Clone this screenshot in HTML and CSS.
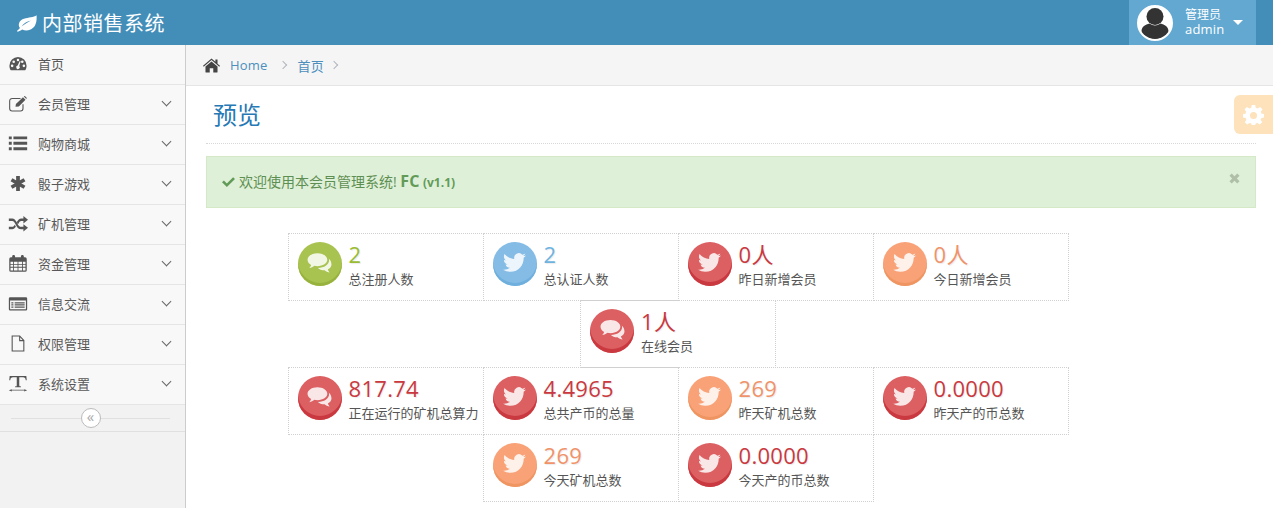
FILE: index.html
```html
<!DOCTYPE html>
<html lang="zh-CN">
<head>
    <meta charset="UTF-8">
    <meta name="viewport" content="width=device-width, initial-scale=1.0">
    <title>内部销售系统</title>
    <link rel="stylesheet" href="styles.css">
</head>
<body>
    <svg class="sprite" xmlns="http://www.w3.org/2000/svg">
        <symbol id="i-leaf" viewBox="0 0 24 20"><path d="M23.500 1C24 8 22.500 13 19.500 15.500 16 19 11 19.500 7 17.500 5.500 18.500 4 19.500 2 20L1 19C2.500 18 3.500 17 4.500 15.800 3 14 2.800 11.500 3.800 9.500 5.500 5 12 4.500 17 3.500 19.500 3 22 2.200 23.500 1ZM17 7C12 8 8.500 10.500 6.300 14 9.500 11.500 13 9 17 7Z" fill-rule="evenodd"/></symbol>
        <symbol id="i-dash" viewBox="-2 -1 28 22"><path fill-rule="evenodd" d="M12 1A12 12 0 0 0 0 13C0 15.500 .7 17.800 2 19.500H22C23.300 17.800 24 15.500 24 13A12 12 0 0 0 12 1ZM12 3.200A1.800 1.800 0 1 1 12 6.800 1.800 1.800 0 0 1 12 3.200ZM6 5.800A1.800 1.800 0 1 1 6 9.400 1.800 1.800 0 0 1 6 5.800ZM18 5.800A1.800 1.800 0 1 1 18 9.400 1.800 1.800 0 0 1 18 5.800ZM3.800 11.500A1.800 1.800 0 1 1 3.800 15.100 1.800 1.800 0 0 1 3.800 11.500ZM20.200 11.500A1.800 1.800 0 1 1 20.200 15.100 1.800 1.800 0 0 1 20.200 11.500ZM14.500 6.500 15.700 7 13.800 13.500A2.500 2.500 0 1 1 11.500 12.800Z"/></symbol>
        <symbol id="i-edit" viewBox="0 0 24 20"><path fill="none" stroke="currentColor" stroke-width="1.300" d="M15 4H5A3 3 0 0 0 2 7V16A3 3 0 0 0 5 19H15A3 3 0 0 0 18 16V11"/><path d="M9.500 10.500 18 2.500 21 5.500 13 13.500 9 14ZM19 1.500 20 1C20.500 1 22.500 3 22.500 3.500L22 4.500Z"/></symbol>
        <symbol id="i-list" viewBox="0 0 24 20"><path d="M1 1.500H4.500V5H1ZM6.500 1.500H23V5H6.500ZM1 8H4.500V11.500H1ZM6.500 8H23V11.500H6.500ZM1 14.500H4.500V18H1ZM6.500 14.500H23V18H6.500Z"/></symbol>
        <symbol id="i-ast" viewBox="0 0 24 20"><path fill="none" stroke="currentColor" stroke-width="4.500" d="M12 1V19M4.200 5.500 19.800 14.500M19.800 5.500 4.200 14.500"/></symbol>
        <symbol id="i-random" viewBox="0 0 24 20"><path d="M18.500 1 24 5.500 18.500 10V7H16C14.500 7 13.800 8 12.800 9.700L12 11 10.500 8.300C12 5.800 13.500 4 16 4H18.500ZM1 4H5C7.500 4 9 6 10.300 8.300L12 11.500C13 13 14 14 16 14H18.500V11L24 15 18.500 19.500V17H16C12.500 17 11.200 14.800 9.800 12.300L8.500 10C7.500 8.300 6.800 7 5 7H1ZM1 14H5C6.500 14 7.300 13 8.200 11.500L9.500 13.700C8 15.800 7 17 5 17H1Z"/></symbol>
        <symbol id="i-cal" viewBox="0 0 24 20"><path fill-rule="evenodd" d="M3.500 2.500H5V1.500A1.300 1.300 0 0 1 8.500 1.500V2.500H15.500V1.500A1.300 1.300 0 0 1 19 1.500V2.500H20.500A2 2 0 0 1 22.500 4.500V18A2 2 0 0 1 20.500 20H3.500A2 2 0 0 1 1.500 18V4.500A2 2 0 0 1 3.500 2.500ZM3 8V10.500H6V8ZM7 8V10.500H11.500V8ZM12.500 8V10.500H17V8ZM18 8V10.500H21V8ZM3 11.500V14H6V11.500ZM7 11.500V14H11.500V11.500ZM12.500 11.500V14H17V11.500ZM18 11.500V14H21V11.500ZM3 15V18.500H6V15ZM7 15V18.500H11.500V15ZM12.500 15V18.500H17V15ZM18 15V18.500H21V15Z"/></symbol>
        <symbol id="i-alt" viewBox="0 0 24 20"><path fill-rule="evenodd" d="M2.500 2.500H21.500A1.500 1.500 0 0 1 23 4V17A1.500 1.500 0 0 1 21.500 18.500H2.500A1.500 1.500 0 0 1 1 17V4A1.500 1.500 0 0 1 2.500 2.500ZM2.500 6.500V17H21.500V6.500ZM4 8.500H6.500V10H4ZM8 8.500H20V10H8ZM4 11H6.500V12.500H4ZM8 11H20V12.500H8ZM4 13.500H6.500V15H4ZM8 13.500H20V15H8Z"/></symbol>
        <symbol id="i-file" viewBox="0 0 24 20"><path fill="none" stroke="currentColor" stroke-width="1.300" d="M5 1H14L19 6.500V19H5ZM14 1V6.500H19"/></symbol>
        <symbol id="i-text" viewBox="0 0 24 20"><path d="M2 1H22L22.500 6H21.300C21 3.500 20.200 2.500 18 2.500H13.500V12C13.500 13 14 13.300 15.500 13.500V14.500H8.500V13.500C10 13.300 10.500 13 10.500 12V2.500H6C3.800 2.500 3 3.500 2.700 6H1.500ZM4.500 16.800V17.500H19.500V16.800L23 18 19.500 19.700V18.500H4.500V19.700L1 18Z"/></symbol>
        <symbol id="i-home" viewBox="0 0 24 20"><path d="M12 0 17.500 4.800V1.500H20.500V7.400L24 10.500 23 11.700 12 2.300 1 11.700 0 10.500ZM12 4.300 20.500 11.500V19A1 1 0 0 1 19.500 20H14.500V14H9.500V20H4.500A1 1 0 0 1 3.500 19V11.500Z"/></symbol>
        <symbol id="i-twitter" viewBox="0 0 24 24"><path d="M23.953 4.570a10 10 0 01-2.825.775 4.958 4.958 0 002.163-2.723c-.951.555-2.005.959-3.127 1.184a4.920 4.920 0 00-8.384 4.482C7.690 8.095 4.067 6.130 1.640 3.162a4.822 4.822 0 00-.666 2.475c0 1.710.870 3.213 2.188 4.096a4.904 4.904 0 01-2.228-.616v.060a4.923 4.923 0 003.946 4.827 4.996 4.996 0 01-2.212.085 4.936 4.936 0 004.604 3.417 9.867 9.867 0 01-6.102 2.105c-.390 0-.779-.023-1.170-.067a13.995 13.995 0 007.557 2.209c9.053 0 13.998-7.496 13.998-13.985 0-.210 0-.420-.015-.630A9.935 9.935 0 0024 4.590z"/></symbol>
        <symbol id="i-comments" viewBox="0 0 24 22"><path d="M10 2C4.600 2 .5 4.800.5 8.400c0 2.100 1.400 3.900 3.500 5.100-.3 1.100-.9 2-1.800 2.900 1.900-.2 3.600-1 5-2.200.9.200 1.800.3 2.800.3 5.400 0 9.500-2.800 9.500-6.100C19.500 4.800 15.400 2 10 2z"/><path d="M20.800 7.200c.3.500.4 1.100.4 1.700 0 4.200-4.800 7.400-10.700 7.400 1.500 1.500 3.800 2.300 6.300 2.200 1.300 1.100 3 1.900 4.900 2.100-.8-.8-1.400-1.800-1.700-2.800 2-1.100 3.500-2.900 3.500-4.900 0-2.300-1-4.400-2.700-5.700z"/></symbol>
        <symbol id="i-gear" viewBox="0 0 24 24"><path fill-rule="evenodd" d="M10 1H14L14.600 4.300 16.700 5.200 19.500 3.300 22.300 6.100 20.400 8.900 21.300 11 24 11.500V15.500L21 16 20.100 18 22 20.800 19.200 23.500 16.500 21.600 14.500 22.400 14 23.900H10L9.500 22.400 7.500 21.600 4.800 23.500 2 20.800 3.900 18 3 16 0 15.500V11.500L2.700 11 3.600 8.900 1.700 6.100 4.500 3.300 7.300 5.200 9.400 4.300ZM12 9A4 4 0 1 0 12 17 4 4 0 0 0 12 9Z"/></symbol>
        <symbol id="i-check" viewBox="0 0 24 20"><path d="M3.500 8 9 13.500 20.500 2 24 5.500 9 20 0 11.500Z"/></symbol>
        <symbol id="i-times" viewBox="0 0 24 24"><path d="M6 1 12 7 18 1 23 6 17 12 23 18 18 23 12 17 6 23 1 18 7 12 1 6Z"/></symbol>
        <symbol id="i-user" viewBox="0 0 32 32"><circle cx="16" cy="9.500" r="8.500"/><path d="M10.500 16.500C6.500 17.500 2.500 19.500 2.500 24.500 2.500 29.500 9 32 16 32S29.500 29.500 29.500 24.500C29.500 19.500 25.500 17.500 21.500 16.500 18 19 14 19 10.500 16.500Z"/></symbol>
    </svg>

    <header class="navbar">
        <a class="brand"><svg class="brand-icon"><use href="#i-leaf"/></svg>内部销售系统</a>
        <div class="user-box">
            <span class="avatar"><svg><use href="#i-user"/></svg></span>
            <span class="user-info"><small>管理员</small>admin</span>
            <span class="caret"></span>
        </div>
    </header>

    <div class="container">
        <aside class="sidebar">
            <ul class="nav-list">
                <li><svg class="nav-icon"><use href="#i-dash"/></svg><span class="nav-text">首页</span></li>
                <li><svg class="nav-icon"><use href="#i-edit"/></svg><span class="nav-text">会员管理</span><span class="arrow"></span></li>
                <li><svg class="nav-icon"><use href="#i-list"/></svg><span class="nav-text">购物商城</span><span class="arrow"></span></li>
                <li><svg class="nav-icon"><use href="#i-ast"/></svg><span class="nav-text">骰子游戏</span><span class="arrow"></span></li>
                <li><svg class="nav-icon"><use href="#i-random"/></svg><span class="nav-text">矿机管理</span><span class="arrow"></span></li>
                <li><svg class="nav-icon"><use href="#i-cal"/></svg><span class="nav-text">资金管理</span><span class="arrow"></span></li>
                <li><svg class="nav-icon"><use href="#i-alt"/></svg><span class="nav-text">信息交流</span><span class="arrow"></span></li>
                <li><svg class="nav-icon"><use href="#i-file"/></svg><span class="nav-text">权限管理</span><span class="arrow"></span></li>
                <li><svg class="nav-icon"><use href="#i-text"/></svg><span class="nav-text">系统设置</span><span class="arrow"></span></li>
            </ul>
            <div class="collapse-bar"><span class="collapse-btn">«</span></div>
        </aside>

        <main class="main">
            <div class="breadcrumbs">
                <svg class="home-icon"><use href="#i-home"/></svg>
                <a>Home</a><span class="sep"></span>
                <a>首页</a><span class="sep"></span>
            </div>
            <div class="settings-btn"><svg><use href="#i-gear"/></svg></div>
            <div class="page-content">
                <div class="page-header"><h1>预览</h1></div>
                <div class="alert">
                    <svg class="check-icon"><use href="#i-check"/></svg>
                    <span>欢迎使用本会员管理系统! <strong>FC</strong> <small>(v1.1)</small></span>
                    <svg class="close-icon"><use href="#i-times"/></svg>
                </div>
                <div class="stats">
                    <div class="stats-row">
                        <div class="infobox green"><span class="infobox-icon"><svg class="comments"><use href="#i-comments"/></svg></span><div><div class="number">2</div><div class="label">总注册人数</div></div></div>
                        <div class="infobox blue"><span class="infobox-icon"><svg><use href="#i-twitter"/></svg></span><div><div class="number">2</div><div class="label">总认证人数</div></div></div>
                        <div class="infobox red"><span class="infobox-icon"><svg><use href="#i-twitter"/></svg></span><div><div class="number">0人</div><div class="label">昨日新增会员</div></div></div>
                        <div class="infobox orange"><span class="infobox-icon"><svg><use href="#i-twitter"/></svg></span><div><div class="number">0人</div><div class="label">今日新增会员</div></div></div>
                    </div>
                    <div class="stats-row">
                        <div class="infobox red"><span class="infobox-icon"><svg class="comments"><use href="#i-comments"/></svg></span><div><div class="number">1人</div><div class="label">在线会员</div></div></div>
                    </div>
                    <div class="stats-row">
                        <div class="infobox red"><span class="infobox-icon"><svg class="comments"><use href="#i-comments"/></svg></span><div><div class="number">817.74</div><div class="label">正在运行的矿机总算力</div></div></div>
                        <div class="infobox red"><span class="infobox-icon"><svg><use href="#i-twitter"/></svg></span><div><div class="number">4.4965</div><div class="label">总共产币的总量</div></div></div>
                        <div class="infobox orange"><span class="infobox-icon"><svg><use href="#i-twitter"/></svg></span><div><div class="number">269</div><div class="label">昨天矿机总数</div></div></div>
                        <div class="infobox red"><span class="infobox-icon"><svg><use href="#i-twitter"/></svg></span><div><div class="number">0.0000</div><div class="label">昨天产的币总数</div></div></div>
                    </div>
                    <div class="stats-row">
                        <div class="infobox orange"><span class="infobox-icon"><svg><use href="#i-twitter"/></svg></span><div><div class="number">269</div><div class="label">今天矿机总数</div></div></div>
                        <div class="infobox red"><span class="infobox-icon"><svg><use href="#i-twitter"/></svg></span><div><div class="number">0.0000</div><div class="label">今天产的币总数</div></div></div>
                    </div>
                </div>
            </div>
        </main>
    </div>
</body>
</html>
```

FILE: styles.css
```css
body {
    font-family: "Open Sans", "Noto Sans CJK SC", sans-serif;
    font-size: 13px;
    margin: 0;
    padding: 0;
    background: #fff;
    color: #393939;
    overflow: hidden;
}

.sprite {
    display: none;
}

/* top bar */
.navbar {
    display: flex;
    align-items: stretch;
    justify-content: space-between;
    height: 45px;
    background: #438eb9;
    color: #fff;
    padding-right: 17px;
}

.brand {
    display: flex;
    align-items: center;
    padding-left: 16px;
    font-size: 20px;
    letter-spacing: .5px;
}

.brand-icon {
    width: 21px;
    height: 18px;
    margin-right: 5px;
    fill: #fff;
}

.user-box {
    display: flex;
    align-items: center;
    width: 127px;
    box-sizing: border-box;
    padding-left: 8px;
    background: #62a8d1;
}

.avatar {
    width: 36px;
    height: 36px;
    box-sizing: border-box;
    border: 2px solid #fff;
    border-radius: 50%;
    background: #fff;
    color: #333;
    overflow: hidden;
    margin-right: 12px;
}

.avatar svg {
    display: block;
    width: 32px;
    height: 32px;
    fill: currentColor;
}

.user-info {
    width: 43px;
    font-size: 13px;
    line-height: 15px;
    margin-top: -1px;
    letter-spacing: .2px;
}

.user-info small {
    display: block;
    font-size: 12px;
    letter-spacing: 0;
}

.caret {
    width: 0;
    height: 0;
    margin-left: 5px;
    border: 5px solid transparent;
    border-top: 5px solid #fff;
    border-bottom: 0;
}

.container {
    display: flex;
    min-height: calc(100vh - 45px);
}

/* sidebar */
.sidebar {
    flex: 0 0 185px;
    background: #f2f2f2;
    border-right: 1px solid #ccc;
}

.nav-list {
    list-style: none;
    margin: 0;
    padding: 0;
}

.nav-list li {
    display: flex;
    align-items: center;
    height: 40px;
    box-sizing: border-box;
    background: #f8f8f8;
    border-bottom: 1px solid #e5e5e5;
    color: #585858;
    padding: 0 0 2px 8px;
}

.nav-icon {
    width: 20px;
    height: 17px;
    margin-right: 10px;
    fill: #555;
    color: #555;
}

.nav-text {
    flex: 1;
}

.arrow {
    width: 6px;
    height: 6px;
    margin: 0 15px 4px 0;
    border-right: 1.5px solid #666;
    border-bottom: 1.5px solid #666;
    transform: rotate(45deg);
}

.collapse-bar {
    position: relative;
    height: 26px;
    border-bottom: 1px solid #e0e0e0;
    display: flex;
    align-items: center;
    justify-content: center;
    padding-right: 4px;
}

.collapse-bar::before {
    content: "";
    position: absolute;
    left: 11px;
    right: 15px;
    top: 13px;
    border-top: 1px solid #e0e0e0;
}

.collapse-btn {
    position: relative;
    width: 18px;
    height: 18px;
    border: 1px solid #bbb;
    border-radius: 50%;
    background: #fff;
    color: #aaa;
    font-size: 15px;
    line-height: 15px;
    text-align: center;
}

/* main area */
.main {
    flex: 1;
    position: relative;
    min-width: 0;
}

.breadcrumbs {
    display: flex;
    align-items: center;
    height: 40px;
    background: #f5f5f5;
    border-bottom: 1px solid #e5e5e5;
    padding-left: 17px;
}

.breadcrumbs a {
    color: #4c8fbd;
    letter-spacing: .2px;
}

.home-icon {
    width: 17px;
    height: 15px;
    margin-right: 10px;
    fill: #444;
}

.sep {
    width: 5px;
    height: 5px;
    margin: 0 12px 0 12px;
    border-top: 1px solid #b2b6bf;
    border-right: 1px solid #b2b6bf;
    transform: rotate(45deg);
}

.sep:last-child {
    margin-left: 7px;
}

.settings-btn {
    position: absolute;
    top: 50px;
    right: 0;
    width: 39px;
    height: 39px;
    background: #fde2bb;
    border-radius: 6px 0 0 6px;
    display: flex;
    align-items: center;
    justify-content: center;
}

.settings-btn svg {
    width: 21px;
    height: 21px;
    fill: #fff;
}

.page-content {
    padding: 0 17px 0 20px;
}

.page-header {
    border-bottom: 1px dotted #d8d8d8;
    padding: 13px 7px 12px;
}

h1 {
    margin: 0;
    font-size: 24px;
    font-weight: normal;
    line-height: 32px;
    color: #2679b5;
}

.alert {
    position: relative;
    display: flex;
    align-items: center;
    gap: 4px;
    height: 48px;
    margin-top: 12px;
    padding: 0 0 2px 15px;
    background: #dff0d8;
    border: 1px solid #d6e9c6;
    color: #5e8f52;
    font-size: 14px;
}

.alert strong {
    font-size: 16px;
    color: #629b58;
}

.alert small {
    font-size: 12px;
    font-weight: bold;
    color: #629b58;
}

.check-icon {
    width: 13px;
    height: 11px;
    fill: #629b58;
}

.close-icon {
    position: absolute;
    top: 16px;
    right: 15px;
    width: 11px;
    height: 11px;
    fill: #afbfa8;
}

/* stat boxes */
.stats {
    margin: 25px 105px 0 0;
}

.stats-row {
    display: flex;
    justify-content: center;
}

.infobox {
    display: flex;
    gap: 7px;
    width: 196px;
    height: 68px;
    box-sizing: border-box;
    margin: -1px 0 0 -1px;
    padding: 8px 8px 8px 9px;
    border: 1px dotted #d0d0d0;
    white-space: nowrap;
}

.stats-row:first-child .infobox {
    margin-top: 0;
}

.infobox-icon {
    flex: 0 0 44px;
    height: 44px;
    border-radius: 50%;
    display: flex;
    align-items: center;
    justify-content: center;
    padding-bottom: 3px;
    box-sizing: border-box;
}

.infobox-icon svg {
    width: 23px;
    height: 23px;
    fill: #fff;
    opacity: .85;
}

.infobox-icon .comments {
    width: 25px;
    height: 23px;
}

.number {
    font-size: 22px;
    line-height: 28px;
    margin-top: -2px;
    letter-spacing: .3px;
    text-shadow: 1px 1px 1px rgba(0, 0, 0, .08);
}

.label {
    line-height: 20px;
    margin-top: 1px;
    color: #555;
}

.green .number { color: #9abc32; }
.blue .number { color: #6fb3e0; }
.red .number { color: #c9393f; }
.orange .number { color: #f0936a; }

.green .infobox-icon { background: #a8c34f; box-shadow: inset 0 -3px 0 #97b33e; }
.blue .infobox-icon { background: #85bce5; box-shadow: inset 0 -3px 0 #6eafdd; }
.red .infobox-icon { background: #dc5f62; box-shadow: inset 0 -4px 0 #c9393f; }
.orange .infobox-icon { background: #f9a278; box-shadow: inset 0 -3px 0 #ee9562; }
```
